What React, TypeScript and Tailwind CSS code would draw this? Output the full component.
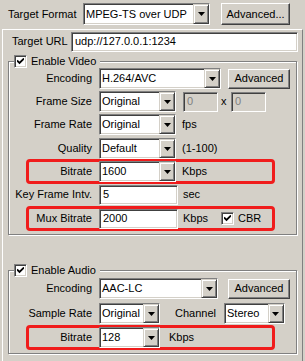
import React from 'react'

const sunken =
  'border border-t-[#808080] border-l-[#808080] border-r-white border-b-white shadow-[inset_1px_1px_0_#404040,inset_-1px_-1px_0_#d4d0c8]'
const raised =
  'border border-t-white border-l-white border-r-[#404040] border-b-[#404040] shadow-[inset_-1px_-1px_0_#808080] bg-[#d4d0c8]'

const Arrow = () => (
  <svg width="7" height="4" viewBox="0 0 7 4">
    <polygon points="0,0 7,0 3.5,4" fill="#000" />
  </svg>
)

const Combo = ({ value, className }: { value: string; className: string }) => (
  <div className={`flex h-[21px] shrink-0 items-stretch bg-white ${sunken} ${className}`}>
    <span className="flex flex-1 items-center overflow-hidden whitespace-nowrap pl-[2px]">
      {value}
    </span>
    <span className="flex w-[16px] items-center justify-center border border-[#d4d0c8] border-r-[#404040] border-b-[#404040] bg-[#d4d0c8] shadow-[inset_1px_1px_0_#fff,inset_-1px_-1px_0_#808080]">
      <Arrow />
    </span>
  </div>
)

const Field = ({
  value,
  className,
  disabled,
}: {
  value: string
  className: string
  disabled?: boolean
}) => (
  <div
    className={`flex h-[20px] shrink-0 items-center whitespace-nowrap pl-[3px] ${sunken} ${
      disabled ? 'bg-[#d4d0c8] text-[#808080]' : 'bg-white'
    } ${className}`}
  >
    {value}
  </div>
)

const Button = ({ label, className }: { label: string; className: string }) => (
  <div className={`flex shrink-0 items-center justify-center ${raised} ${className}`}>
    {label}
  </div>
)

const Check = () => (
  <span className={`flex h-[13px] w-[13px] shrink-0 items-center justify-center bg-white ${sunken}`}>
    <svg width="7" height="7" viewBox="0 0 7 7">
      <path d="M0 2.5 L2.5 5 L7 0.5" stroke="#000" strokeWidth="1.8" fill="none" />
    </svg>
  </span>
)

const Highlight = () => (
  <div className="pointer-events-none absolute -top-[2px] left-[17px] h-[25px] w-[249px] rounded-[4px] border-[3px] border-[#f01c1c]" />
)

const Row = ({
  label,
  children,
  className = '',
  mark,
}: {
  label: string
  children: React.ReactNode
  className?: string
  mark?: boolean
}) => (
  <div className={`relative flex h-[21px] items-center ${className}`}>
    {mark && <Highlight />}
    <span className="relative w-[83px] shrink-0 whitespace-nowrap text-right">{label}</span>
    <div className="relative ml-[7px] flex items-center">{children}</div>
  </div>
)

const Group = ({
  title,
  children,
  className,
}: {
  title: string
  children: React.ReactNode
  className: string
}) => (
  <div
    className={`relative ml-[5px] w-[289px] border border-[#808080] shadow-[inset_1px_1px_0_#fff,1px_1px_0_#fff] ${className}`}
  >
    <div className="absolute -top-[7px] left-[5px] flex items-center gap-[4px] bg-[#d4d0c8] pr-[4px]">
      <Check />
      <span className="leading-[13px]">{title}</span>
    </div>
    {children}
  </div>
)

export default function App() {
  return (
    <div className="h-[361px] w-[305px] overflow-hidden bg-[#d4d0c8] font-['Liberation_Sans',Arial,sans-serif] text-[11px] text-black">
      <div className="mt-[3px] flex h-[22px] items-center pl-[8px]">
        <span className="w-[75px] shrink-0 whitespace-nowrap">Target Format</span>
        <Combo value="MPEG-TS over UDP" className="h-[22px] w-[127px]" />
        <Button label="Advanced..." className="ml-[11px] h-[22px] w-[69px]" />
      </div>

      <div className="ml-[2px] mt-[4px] h-[340px] w-[301px] border border-t-white border-l-white border-r-[#808080] border-b-[#808080]">
        <div className="mt-[2px] flex h-[19px] items-center">
          <span className="w-[68px] shrink-0 pl-[9px] whitespace-nowrap">Target URL</span>
          <Field value="udp://127.0.0.1:1234" className="h-[19px] w-[227px]" />
        </div>

        <Group title="Enable Video" className="mt-[10px] pb-[5px] pt-[6px]">
          <Row label="Encoding">
            <Combo value="H.264/AVC" className="w-[122px]" />
            <Button label="Advanced" className="ml-[7px] h-[20px] w-[62px]" />
          </Row>
          <Row label="Frame Size" className="mt-[2px]">
            <Combo value="Original" className="w-[77px]" />
            <Field value="0" disabled className="ml-[7px] w-[35px]" />
            <span className="mx-[3px] w-[7px]">x</span>
            <Field value="0" disabled className="w-[35px]" />
          </Row>
          <Row label="Frame Rate" className="mt-[2px]">
            <Combo value="Original" className="w-[77px]" />
            <span className="ml-[6px]">fps</span>
          </Row>
          <Row label="Quality" className="mt-[3px]">
            <Combo value="Default" className="w-[77px]" />
            <span className="ml-[6px]">(1-100)</span>
          </Row>
          <Row label="Bitrate" className="mt-[2px]" mark>
            <Combo value="1600" className="w-[77px]" />
            <span className="ml-[6px]">Kbps</span>
          </Row>
          <Row label="Key Frame Intv." className="mt-[2px]">
            <Field value="5" className="w-[79px]" />
            <span className="ml-[5px]">sec</span>
          </Row>
          <Row label="Mux Bitrate" className="mt-[3px]" mark>
            <Field value="2000" className="w-[79px]" />
            <span className="ml-[5px]">Kbps</span>
            <span className="ml-[13px]">
              <Check />
            </span>
            <span className="ml-[4px]">CBR</span>
          </Row>
        </Group>

        <Group title="Enable Audio" className="mt-[35px] h-[84px] pt-[7px]">
          <Row label="Encoding">
            <Combo value="AAC-LC" className="w-[119px]" />
            <Button label="Advanced" className="ml-[10px] h-[20px] w-[62px]" />
          </Row>
          <Row label="Sample Rate" className="mt-[4px]">
            <Combo value="Original" className="w-[61px]" />
            <span className="ml-[15px]">Channel</span>
            <Combo value="Stereo" className="ml-[8px] w-[61px]" />
          </Row>
          <Row label="Bitrate" className="mt-[3px]" mark>
            <Combo value="128" className="w-[61px]" />
            <span className="ml-[9px]">Kbps</span>
          </Row>
        </Group>
      </div>
    </div>
  )
}
